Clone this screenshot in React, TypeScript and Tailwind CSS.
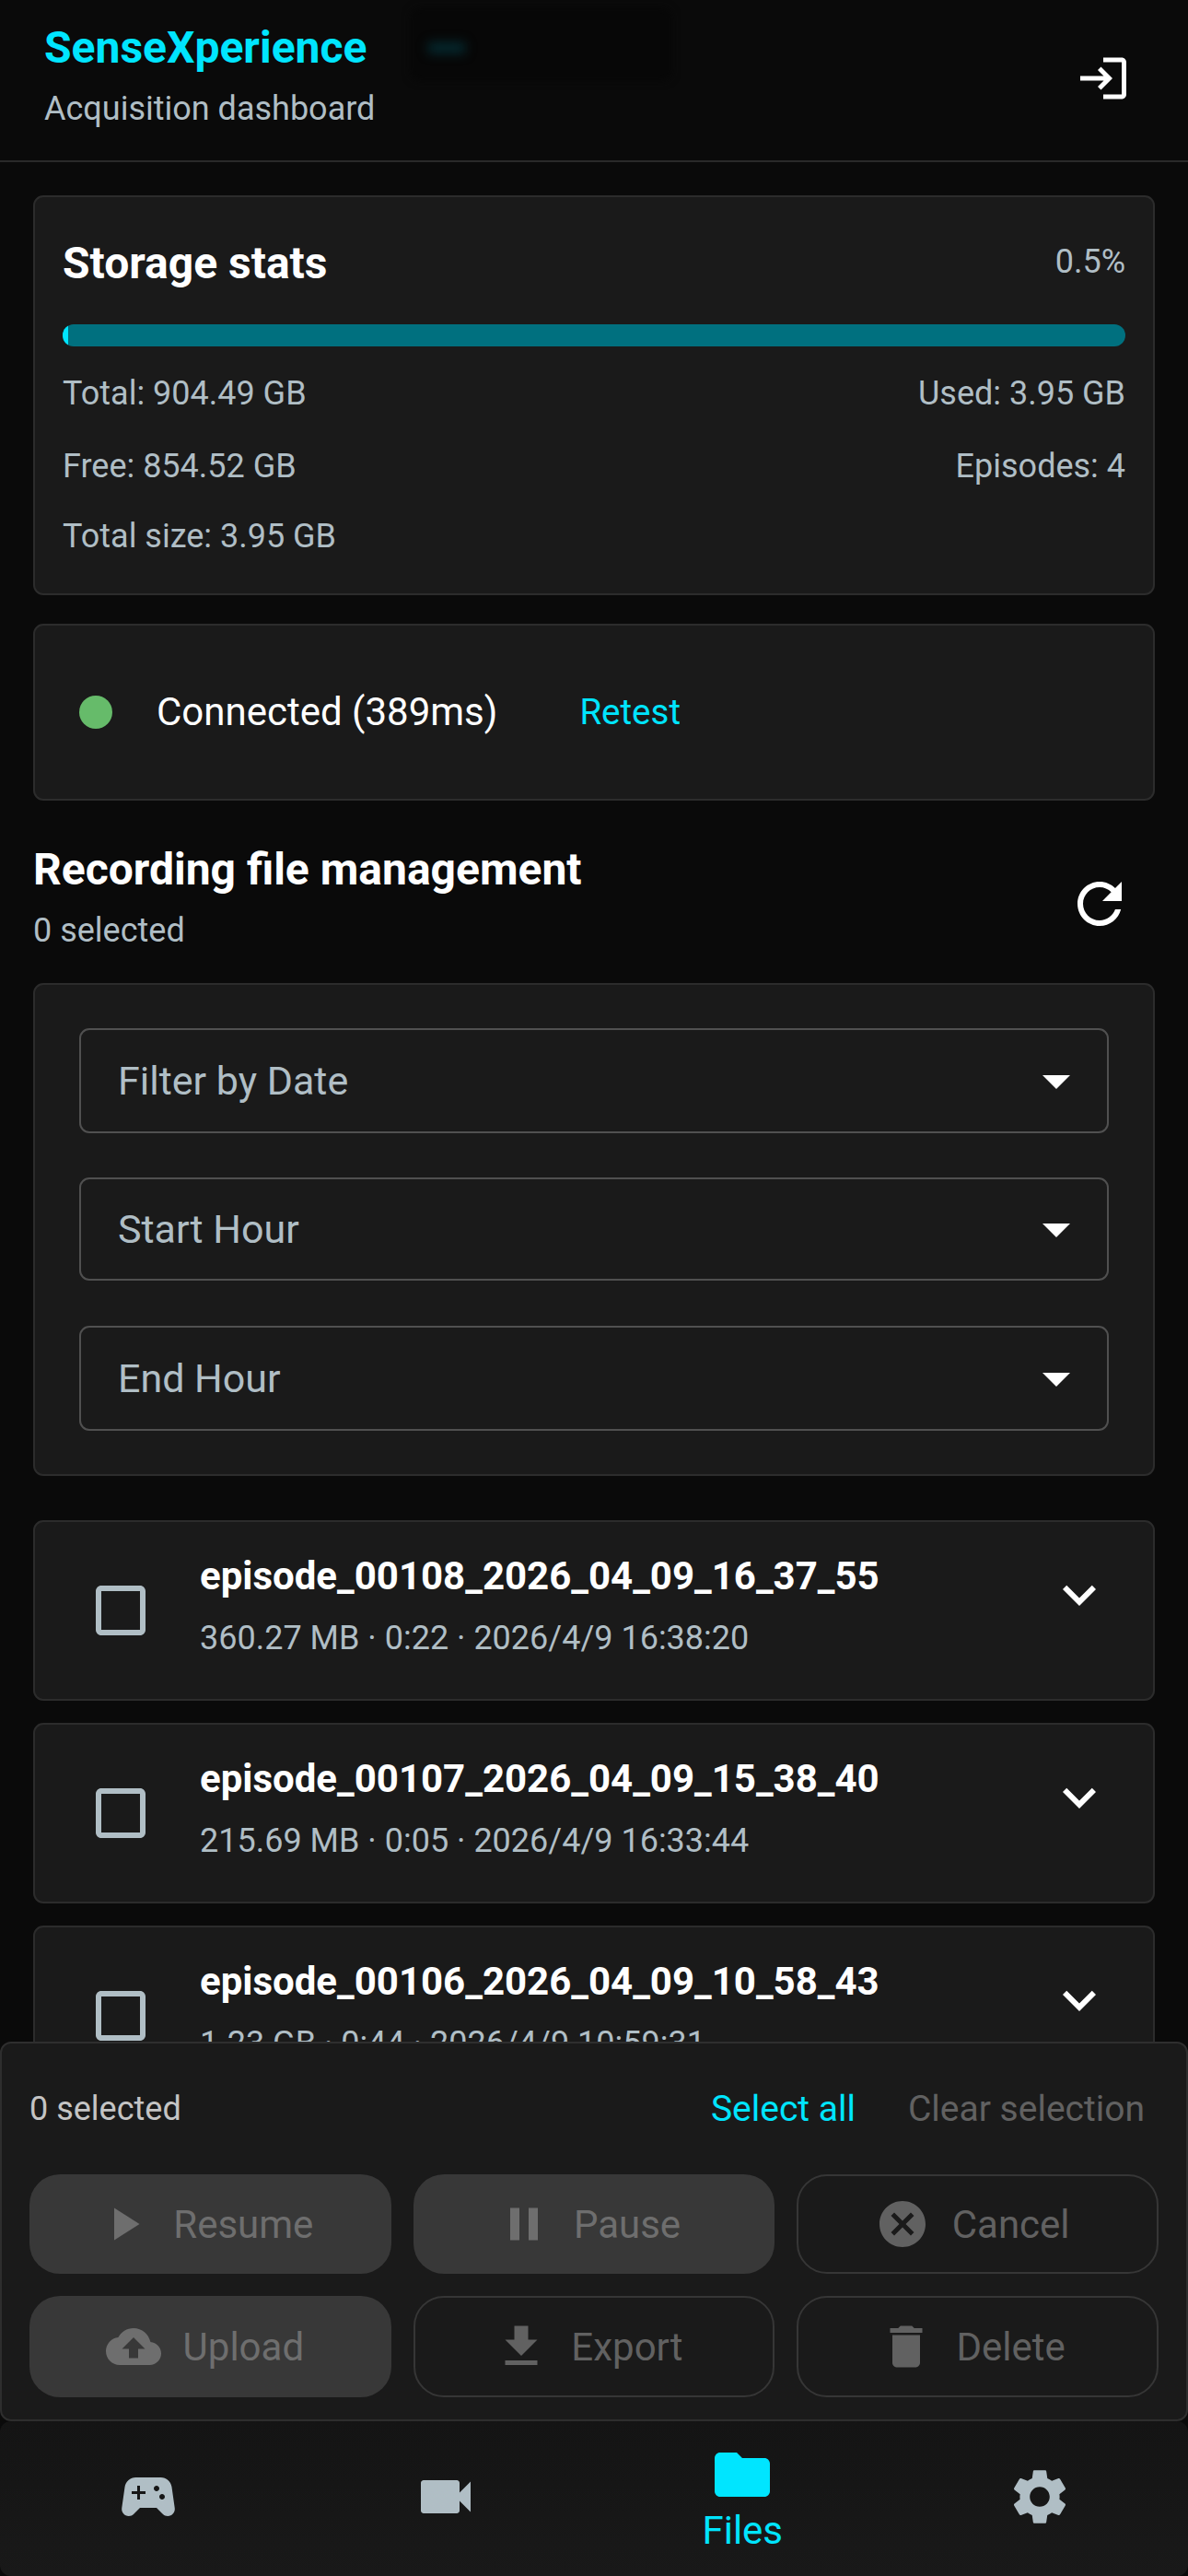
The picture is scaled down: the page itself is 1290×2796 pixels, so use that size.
import type { ReactNode } from 'react'

const paths = {
  login: 'M11 7 9.6 8.4l2.6 2.6H2v2h10.2l-2.6 2.6L11 17l5-5-5-5zm9 12h-8v2h8c1.1 0 2-.9 2-2V5c0-1.1-.9-2-2-2h-8v2h8v14z',
  refresh: 'M17.65 6.35C16.2 4.9 14.21 4 12 4c-4.42 0-7.99 3.58-7.99 8s3.57 8 7.99 8c3.73 0 6.84-2.55 7.73-6h-2.08c-.82 2.33-3.04 4-5.65 4-3.31 0-6-2.69-6-6s2.69-6 6-6c1.66 0 3.14.69 4.22 1.78L13 11h7V4l-2.35 2.35z',
  dropdown: 'M7 10l5 5 5-5z',
  checkbox: 'M19 5v14H5V5h14m0-2H5c-1.1 0-2 .9-2 2v14c0 1.1.9 2 2 2h14c1.1 0 2-.9 2-2V5c0-1.1-.9-2-2-2z',
  expand: 'M16.59 8.59L12 13.17 7.41 8.59 6 10l6 6 6-6z',
  play: 'M8 5v14l11-7z',
  pause: 'M6 19h4V5H6v14zm8-14v14h4V5h-4z',
  cancel: 'M12 2C6.47 2 2 6.47 2 12s4.47 10 10 10 10-4.47 10-10S17.53 2 12 2zm5 13.59L15.59 17 12 13.41 8.41 17 7 15.59 10.59 12 7 8.41 8.41 7 12 10.59 15.59 7 17 8.41 13.41 12 17 15.59z',
  upload: 'M19.35 10.04C18.67 6.59 15.64 4 12 4 9.11 4 6.6 5.64 5.35 8.04 2.34 8.36 0 10.91 0 14c0 3.31 2.69 6 6 6h13c2.76 0 5-2.24 5-5 0-2.64-2.05-4.78-4.65-4.96zM14 13v4h-4v-4H7l5-5 5 5h-3z',
  download: 'M5 20h14v-2H5v2zM19 9h-4V3H9v6H5l7 7 7-7z',
  trash: 'M6 19c0 1.1.9 2 2 2h8c1.1 0 2-.9 2-2V7H6v12zM19 4h-3.5l-1-1h-5l-1 1H5v2h14V4z',
  gamepad: 'M21.58 16.09l-1.09-7.66C20.21 6.46 18.52 5 16.53 5H7.47C5.48 5 3.79 6.46 3.51 8.43l-1.09 7.66C2.2 17.63 3.39 19 4.94 19c.68 0 1.32-.27 1.8-.75L9 16h6l2.25 2.25c.48.48 1.13.75 1.8.75 1.56 0 2.75-1.37 2.53-2.91zM11 11H9v2H8v-2H6v-1h2V8h1v2h2v1zm4-1c-.55 0-1-.45-1-1s.45-1 1-1 1 .45 1 1-.45 1-1 1zm2 3c-.55 0-1-.45-1-1s.45-1 1-1 1 .45 1 1-.45 1-1 1z',
  video: 'M17 10.5V7c0-.55-.45-1-1-1H4c-.55 0-1 .45-1 1v10c0 .55.45 1 1 1h12c.55 0 1-.45 1-1v-3.5l4 4v-11l-4 4z',
  folder: 'M10 4H4c-1.1 0-1.99.9-1.99 2L2 18c0 1.1.9 2 2 2h16c1.1 0 2-.9 2-2V8c0-1.1-.9-2-2-2h-8l-2-2z',
  gear: 'M19.14 12.94c.04-.3.06-.61.06-.94 0-.32-.02-.64-.07-.94l2.03-1.58c.18-.14.23-.41.12-.61l-1.92-3.32c-.12-.22-.37-.29-.59-.22l-2.39.96c-.5-.38-1.03-.7-1.62-.94l-.36-2.54c-.04-.24-.24-.41-.48-.41h-3.84c-.24 0-.43.17-.47.41l-.36 2.54c-.59.24-1.13.57-1.62.94l-2.39-.96c-.22-.08-.47 0-.59.22L2.74 8.87c-.12.21-.08.47.12.61l2.03 1.58c-.05.3-.09.63-.09.94s.02.64.07.94l-2.03 1.58c-.18.14-.23.41-.12.61l1.92 3.32c.12.22.37.29.59.22l2.39-.96c.5.38 1.03.7 1.62.94l.36 2.54c.05.24.24.41.48.41h3.84c.24 0 .44-.17.47-.41l.36-2.54c.59-.24 1.13-.56 1.62-.94l2.39.96c.22.08.47 0 .59-.22l1.92-3.32c.12-.22.07-.47-.12-.61l-2.01-1.58zM12 15.6c-1.98 0-3.6-1.62-3.6-3.6s1.62-3.6 3.6-3.6 3.6 1.62 3.6 3.6-1.62 3.6-3.6 3.6z',
}

function Icon({ d, className }: { d: string; className: string }) {
  return (
    <svg viewBox="0 0 24 24" fill="currentColor" className={className}>
      <path d={d} />
    </svg>
  )
}

function Card({ className, children }: { className: string; children: ReactNode }) {
  return <div className={`rounded-[11px] border-[2px] border-[#2c2c2c] bg-[#1a1a1a] ${className}`}>{children}</div>
}

function SelectBox({ label, className }: { label: string; className: string }) {
  return (
    <div className={`flex items-center justify-between rounded-[11px] border-[2px] border-[#505050] pl-[40px] pr-[19px] ${className}`}>
      <span className="text-[43px] text-[#b0bec5]">{label}</span>
      <Icon d={paths.dropdown} className="h-[72px] w-[72px] text-white" />
    </div>
  )
}

function EpisodeRow({ name, meta }: { name: string; meta: string }) {
  return (
    <Card className="flex h-[196px] shrink-0 items-start pl-[57px] pr-[44px]">
      <Icon d={paths.checkbox} className="mt-[60px] h-[72px] w-[72px] shrink-0 text-[#b0bec5]" />
      <div className="ml-[50px] flex-1 pt-[33px]">
        <div className="text-[42px] leading-[52px] font-bold text-white">{name}</div>
        <div className="mt-[16px] text-[36px] leading-[50px] text-[#b0bec5]">{meta}</div>
      </div>
      <Icon d={paths.expand} className="mt-[43px] h-[72px] w-[72px] shrink-0 text-white" />
    </Card>
  )
}

function ActionButton({ icon, label, filled }: { icon: string; label: string; filled?: boolean }) {
  return (
    <div
      className={`flex items-center justify-center rounded-[33px] pr-[12px] ${
        filled ? 'bg-[#383838] text-[#6e6e6e]' : 'border-[2px] border-[#363636] text-[#616161]'
      }`}
    >
      <Icon d={icon} className="mr-[24px] h-[60px] w-[60px] shrink-0" />
      <span className="text-[42px]">{label}</span>
    </div>
  )
}

export default function App() {
  return (
    <div className="relative h-[2796px] w-[1290px] overflow-hidden bg-[#0a0a0a] font-['Roboto',sans-serif]">
      {/* faint remnant behind the status area */}
      <div className="absolute left-[445px] top-[8px] h-[80px] w-[285px] rounded-[12px] bg-[#070707] blur-[4px]" />
      <div className="absolute left-[465px] top-[46px] h-[12px] w-[40px] bg-[#042a30] blur-[6px]" />

      <header className="relative flex h-[176px] items-start justify-between border-b-[2px] border-[#2a2a2a] pl-[48px] pr-[62px]">
        <div>
          <div className="mt-[24px] text-[48px] leading-[56px] font-bold text-[#00e5ff]">SenseXperience</div>
          <div className="mt-[13px] text-[36px] leading-[50px] text-[#b0bec5]">Acquisition dashboard</div>
        </div>
        <Icon d={paths.login} className="mt-[55px] h-[60px] w-[60px] text-white" />
      </header>

      <main className="relative flex flex-col px-[36px]">
        <Card className="mt-[36px] flex h-[434px] flex-col px-[30px]">
          <div className="mt-[40px] flex items-center justify-between">
            <span className="text-[48px] leading-[64px] font-bold text-white">Storage stats</span>
            <span className="mb-[4px] text-[36px] text-[#b0bec5]">0.5%</span>
          </div>
          <div className="mt-[34px] h-[24px] overflow-hidden rounded-full bg-[#00707f]">
            <div className="h-full w-[6px] bg-[#00e5ff]" />
          </div>
          <div className="mt-[26px] flex justify-between text-[36px] leading-[50px] text-[#b0bec5]">
            <span>Total: 904.49 GB</span>
            <span>Used: 3.95 GB</span>
          </div>
          <div className="mt-[29px] flex justify-between text-[36px] leading-[50px] text-[#b0bec5]">
            <span>Free: 854.52 GB</span>
            <span>Episodes: 4</span>
          </div>
          <div className="mt-[26px] text-[36px] leading-[50px] text-[#b0bec5]">Total size: 3.95 GB</div>
        </Card>

        <Card className="mt-[31px] flex h-[192px] items-center pl-[48px]">
          <div className="h-[36px] w-[36px] rounded-full bg-[#66bb6a]" />
          <span className="mb-[2px] ml-[48px] text-[42px] text-white">Connected (389ms)</span>
          <span className="ml-[89px] text-[38.5px] text-[#00e5ff]">Retest</span>
        </Card>

        <div className="mt-[46px] flex h-[121px] items-center justify-between">
          <div>
            <div className="text-[48px] leading-[54px] font-bold text-white">Recording file management</div>
            <div className="mt-[14px] text-[36px] leading-[50px] text-[#b0bec5]">0 selected</div>
          </div>
          <Icon d={paths.refresh} className="mr-[24px] mt-[10px] h-[72px] w-[72px] text-white" />
        </div>

        <Card className="mt-[31px] flex h-[535px] flex-col px-[48px] pt-[47px]">
          <SelectBox label="Filter by Date" className="h-[114px]" />
          <SelectBox label="Start Hour" className="mt-[48px] h-[112px]" />
          <SelectBox label="End Hour" className="mt-[49px] h-[114px]" />
        </Card>

        <div className="mt-[48px] flex flex-col gap-[24px]">
          <EpisodeRow name="episode_00108_2026_04_09_16_37_55" meta="360.27 MB · 0:22 · 2026/4/9 16:38:20" />
          <EpisodeRow name="episode_00107_2026_04_09_15_38_40" meta="215.69 MB · 0:05 · 2026/4/9 16:33:44" />
          <EpisodeRow name="episode_00106_2026_04_09_10_58_43" meta="1.23 GB · 0:44 · 2026/4/9 10:59:31" />
        </div>
      </main>

      <div className="absolute inset-x-0 bottom-0 flex flex-col">
        <div className="flex h-[412px] flex-col rounded-[12px] border-[2px] border-[#2e2e2e] bg-[#1a1a1a] px-[30px] pb-[24px]">
          <div className="flex h-[142px] items-center justify-between">
            <span className="text-[36px] text-[#c4c4c4]">0 selected</span>
            <div className="mr-[15px] flex items-center gap-[57px] text-[39px]">
              <span className="text-[#00e5ff]">Select all</span>
              <span className="text-[#616161]">Clear selection</span>
            </div>
          </div>
          <div className="grid flex-1 grid-cols-3 grid-rows-[108px_110px] gap-x-[24px] gap-y-[24px]">
            <ActionButton icon={paths.play} label="Resume" filled />
            <ActionButton icon={paths.pause} label="Pause" filled />
            <ActionButton icon={paths.cancel} label="Cancel" />
            <ActionButton icon={paths.upload} label="Upload" filled />
            <ActionButton icon={paths.download} label="Export" />
            <ActionButton icon={paths.trash} label="Delete" />
          </div>
        </div>
        <nav className="grid h-[168px] grid-cols-4 rounded-[12px] bg-linear-to-b from-[#141414] to-[#191919]">
          <div className="flex justify-center pt-[46px]">
            <Icon d={paths.gamepad} className="h-[72px] w-[72px] text-[#b0bec5]" />
          </div>
          <div className="flex justify-center pt-[46px]">
            <Icon d={paths.video} className="h-[72px] w-[72px] text-[#b0bec5]" />
          </div>
          <div className="flex flex-col items-center pt-[22px]">
            <Icon d={paths.folder} className="h-[72px] w-[72px] text-[#00e5ff]" />
            <span className="mt-[2px] text-[42px] leading-[46px] text-[#00e5ff]">Files</span>
          </div>
          <div className="flex justify-center pt-[46px]">
            <Icon d={paths.gear} className="h-[72px] w-[72px] text-[#b0bec5]" />
          </div>
        </nav>
      </div>
    </div>
  )
}
